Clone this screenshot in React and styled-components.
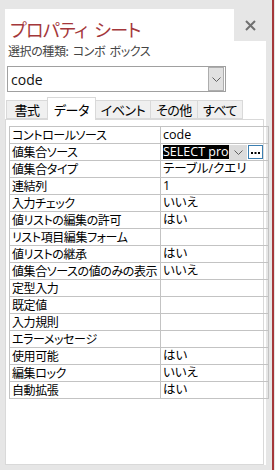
import styled, { createGlobalStyle } from "styled-components";

const GlobalStyle = createGlobalStyle`
  html, body {
    margin: 0;
    padding: 0;
    background: #e6e6e6;
  }
  body {
    font-family: "Open Sans", "Noto Sans CJK JP", sans-serif;
    font-feature-settings: "palt";
    color: #000;
  }
`;

const tabs = ["書式", "データ", "イベント", "その他", "すべて"];

const rows = [
  { name: "コントロールソース", value: "code" },
  { name: "値集合ソース", value: "SELECT products.code FROM products;", selected: true },
  { name: "値集合タイプ", value: "テーブル/クエリ" },
  { name: "連結列", value: "1" },
  { name: "入力チェック", value: "いいえ" },
  { name: "値リストの編集の許可", value: "はい" },
  { name: "リスト項目編集フォーム", value: "" },
  { name: "値リストの継承", value: "はい" },
  { name: "値集合ソースの値のみの表示", value: "いいえ" },
  { name: "定型入力", value: "" },
  { name: "既定値", value: "" },
  { name: "入力規則", value: "" },
  { name: "エラーメッセージ", value: "" },
  { name: "使用可能", value: "はい" },
  { name: "編集ロック", value: "いいえ" },
  { name: "自動拡張", value: "はい" },
];

function Chevron() {
  return (
    <svg width="9" height="5" viewBox="0 0 9 5">
      <polyline points="0.5,0.5 4.5,4.5 8.5,0.5" fill="none" stroke="#606060" strokeWidth="1" />
    </svg>
  );
}

export default function App() {
  return (
    <>
      <GlobalStyle />
      <Page>
        <Sheet>
          <Header>
            <TitleBox>
              <Title>
                プロパティ<Gap />シート
              </Title>
            </TitleBox>
            <CloseBox>
              <svg width="11" height="11" viewBox="0 0 11 11">
                <path d="M1 1 L10 10 M10 1 L1 10" stroke="#707070" strokeWidth="2" />
              </svg>
            </CloseBox>
          </Header>
          <Body>
            <Subtitle>選択の種類: コンボ ボックス</Subtitle>
            <Combo>
              <ComboText>code</ComboText>
              <ComboButton>
                <Chevron />
              </ComboButton>
            </Combo>
            <TabRow>
              {tabs.map((t, i) => (
                <Tab key={t} $active={i === 1}>
                  {t}
                </Tab>
              ))}
            </TabRow>
            <TabPanel>
              <Grid>
                <tbody>
                  {rows.map((r) => (
                    <tr key={r.name}>
                      <NameCell>{r.name}</NameCell>
                      <ValueCell>
                        {r.selected ? (
                          <SelectedValue>
                            <Highlight>{r.value}</Highlight>
                            <CellDrop>
                              <Chevron />
                            </CellDrop>
                            <Dots>
                              <svg width="9" height="3" viewBox="0 0 9 3">
                                <rect x="0" y="0" width="2" height="2" fill="#000" />
                                <rect x="3.5" y="0" width="2" height="2" fill="#000" />
                                <rect x="7" y="0" width="2" height="2" fill="#000" />
                              </svg>
                            </Dots>
                          </SelectedValue>
                        ) : (
                          r.value
                        )}
                      </ValueCell>
                    </tr>
                  ))}
                </tbody>
              </Grid>
            </TabPanel>
          </Body>
        </Sheet>
        <RedLine />
      </Page>
    </>
  );
}

const Page = styled.div`
  display: flex;
  width: 275px;
  height: 470px;
  background: #e6e6e6;
  overflow: hidden;
`;

const Sheet = styled.div`
  display: flex;
  flex-direction: column;
  width: 261px;
  margin: 9px 0 5px 5px;
`;

const Header = styled.div`
  display: flex;
  height: 32px;
`;

const TitleBox = styled.div`
  width: 229px;
  background: #fff;
  padding: 8px 0 0 5px;
  box-sizing: border-box;
`;

const Title = styled.div`
  display: flex;
  font-family: "Noto Sans CJK JP", sans-serif;
  font-size: 18px;
  line-height: 24px;
  letter-spacing: -0.6px;
  color: #a4373a;
`;

const Gap = styled.span`
  width: 7px;
`;

const CloseBox = styled.div`
  flex: 1;
  display: flex;
  align-items: center;
  justify-content: center;
`;

const Body = styled.div`
  flex: 1;
  display: flex;
  flex-direction: column;
  background: #fff;
  padding-right: 2px;
`;

const Subtitle = styled.div`
  height: 20px;
  line-height: 20px;
  padding-left: 3px;
  font-family: "Noto Sans CJK JP", sans-serif;
  font-size: 12px;
  letter-spacing: -0.4px;
  word-spacing: 2px;
  color: #444;
`;

const Combo = styled.div`
  display: flex;
  align-items: center;
  width: 219px;
  height: 26px;
  box-sizing: border-box;
  margin: 5px 0 0 2px;
  border: 1px solid #a0a0a0;
  padding-right: 1px;
`;

const ComboText = styled.div`
  flex: 1;
  padding-left: 3px;
  font-size: 14px;
  color: #111;
`;

const ComboButton = styled.div`
  display: flex;
  align-items: center;
  justify-content: center;
  width: 16px;
  height: 24px;
  box-sizing: border-box;
  background: #e1e1e1;
  border: 1px solid #adadad;
`;

const TabRow = styled.div`
  display: flex;
  align-items: flex-end;
  height: 22px;
  margin: 5px 0 0 2px;
`;

const Tab = styled.div`
  display: flex;
  align-items: center;
  justify-content: center;
  box-sizing: border-box;
  height: ${(p) => (p.$active ? "23px" : "19px")};
  margin-bottom: ${(p) => (p.$active ? "-1px" : "0")};
  padding: 0 ${(p) => (p.$active ? "6px" : "5px")};
  min-width: 42px;
  background: ${(p) => (p.$active ? "#fff" : "#f0f0f0")};
  border: 1px solid #d9d9d9;
  border-bottom: ${(p) => (p.$active ? "none" : "1px solid #d9d9d9")};
  margin-left: -1px;
  position: relative;
  z-index: ${(p) => (p.$active ? 1 : 0)};
  font-family: "Noto Sans CJK JP", sans-serif;
  font-size: 13px;
  letter-spacing: -0.5px;
  color: #000;
`;

const TabPanel = styled.div`
  flex: 1;
  border: 1px solid #d9d9d9;
  padding: 6px 0 0 3px;
`;

const Grid = styled.table`
  border-collapse: collapse;
  table-layout: fixed;
  width: 253px;

  td {
    border: 1px solid #c3c3c3;
    height: 16px;
    padding: 0 0 0 2px;
    line-height: 16px;
    font-size: 12.5px;
    white-space: nowrap;
    overflow: hidden;
  }
`;

const NameCell = styled.td`
  width: 148px;
  font-family: "Noto Sans CJK JP", sans-serif;
  letter-spacing: -0.4px;

  && {
    font-size: 12px;
  }
`;

const ValueCell = styled.td`
  width: 105px;
`;

const SelectedValue = styled.div`
  display: flex;
  align-items: center;
  height: 16px;
`;

const Highlight = styled.div`
  width: 66px;
  height: 14px;
  line-height: 14px;
  background: #000;
  color: #fff;
  overflow: hidden;
  white-space: nowrap;
`;

const CellDrop = styled.div`
  display: flex;
  align-items: center;
  justify-content: center;
  width: 18px;
  height: 15px;
  background: #dcdcdc;
`;

const Dots = styled.div`
  display: flex;
  align-items: flex-end;
  justify-content: center;
  width: 15px;
  height: 14px;
  box-sizing: border-box;
  margin-left: 1px;
  padding-bottom: 3px;
  border: 1px solid #3c7fb1;
  background: #fff;
`;

const RedLine = styled.div`
  width: 2px;
  margin-left: auto;
  margin-right: 1px;
  background: #a4373a;
`;
